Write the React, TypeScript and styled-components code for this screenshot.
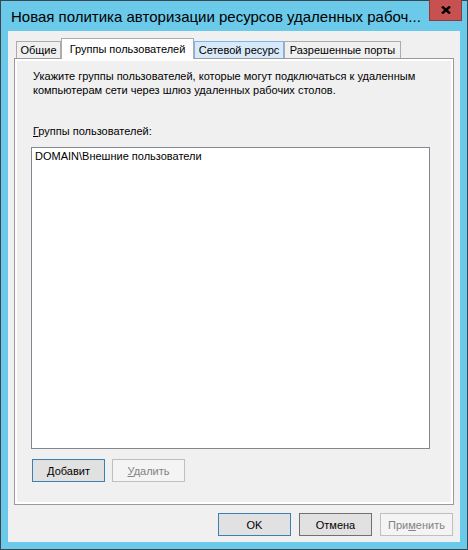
import React from "react";
import styled, { createGlobalStyle, css } from "styled-components";

const Global = createGlobalStyle`
  html, body { margin: 0; padding: 0; background: #ffffff; }
  body { font-family: "Liberation Sans", Arial, sans-serif; }
  * { box-sizing: border-box; }
`;

const Window = styled.div`
  width: 468px;
  height: 550px;
  border: 1px solid #3b4650;
  background: #6bcaea;
  display: flex;
  flex-direction: column;
`;

const TitleBar = styled.div`
  height: 30px;
  display: flex;
  align-items: center;
  flex: none;
`;

const Title = styled.div`
  flex: 1;
  padding-left: 10px;
  font-size: 15px;
  color: #000000;
  white-space: nowrap;
  overflow: hidden;
`;

const CloseButton = styled.div`
  align-self: flex-start;
  margin-top: -1px;
  margin-right: 5px;
  width: 33px;
  height: 21px;
  background: #c75050;
  border: 1px solid #8a3b3b;
  border-top: none;
  display: flex;
  align-items: center;
  justify-content: center;
`;

const Client = styled.div`
  flex: 1;
  margin: 0 7px 7px;
  background: #f0f0f0;
  display: flex;
  flex-direction: column;
  padding: 7px 6px 6px;
`;

const TabStrip = styled.div`
  height: 20px;
  display: flex;
  align-items: flex-end;
  padding-left: 2px;
  flex: none;
  position: relative;
  z-index: 1;
`;

type TabKind = "normal" | "selected" | "hot";

const Tab = styled.div<{ $kind: TabKind; $w: number }>`
  width: ${(p) => p.$w}px;
  height: 17px;
  border: 1px solid #acacac;
  border-bottom: none;
  background: #f0f0f0;
  font-size: 11px;
  color: #000;
  display: flex;
  align-items: center;
  justify-content: center;
  white-space: nowrap;
  ${(p) =>
    p.$kind === "selected" &&
    css`
      height: 21px;
      margin-bottom: -1px;
      background: #ffffff;
    `}
  ${(p) =>
    p.$kind === "hot" &&
    css`
      background: #d8eaf9;
      border-color: #7eb4ea;
    `}
`;

const Panel = styled.div`
  height: 447px;
  flex: none;
  border: 1px solid #999a9c;
  background: #ffffff;
  padding: 2px;
  display: flex;
`;

const Page = styled.div`
  flex: 1;
  background: #f0f0f0;
  display: flex;
  flex-direction: column;
  align-items: flex-start;
  padding: 8px 14px 0;
  font-size: 11px;
  color: #000;
`;

const Description = styled.div`
  margin-left: 2px;
  line-height: 14px;
`;

const Label = styled.div`
  margin: 27px 0 0 2px;
  line-height: 14px;
`;

const Mn = styled.u`
  text-underline-offset: 1px;
`;

const ListBox = styled.div`
  margin-top: 9px;
  width: 399px;
  height: 302px;
  border: 1px solid #828790;
  background: #ffffff;
  padding: 1px 2px 0;
`;

const ListItem = styled.div`
  line-height: 14px;
  padding-left: 1px;
  white-space: nowrap;
`;

const ButtonRow = styled.div<{ $end?: boolean }>`
  display: flex;
  gap: ${(p) => (p.$end ? 8 : 7)}px;
  flex: none;
  ${(p) =>
    p.$end
      ? css`
          justify-content: flex-end;
          margin-top: 8px;
          padding-right: 1px;
        `
      : css`
          margin-top: 10px;
          margin-left: 1px;
        `}
`;

type BtnKind = "default" | "normal" | "disabled";

const Button = styled.div<{ $kind: BtnKind }>`
  width: 73px;
  height: 23px;
  border: 1px solid #adadad;
  background: #e1e1e1;
  font-size: 11px;
  color: #000;
  display: flex;
  align-items: center;
  justify-content: center;
  white-space: nowrap;
  ${(p) =>
    p.$kind === "default" &&
    css`
      border-color: #3c7fb1;
    `}
  ${(p) =>
    p.$kind === "normal" &&
    css`
      border-color: #707070;
    `}
  ${(p) =>
    p.$kind === "disabled" &&
    css`
      border-color: #bfbfbf;
      background: #f4f4f4;
      color: #838383;
    `}
`;

export default function App() {
  return (
    <>
      <Global />
      <Window>
        <TitleBar>
          <Title>Новая политика авторизации ресурсов удаленных рабоч...</Title>
          <CloseButton>
            <svg width="10" height="8" viewBox="0 0 10 8">
              <path d="M1 0.5 L9 7.5 M9 0.5 L1 7.5" stroke="#000" strokeWidth="2.4" fill="none" />
            </svg>
          </CloseButton>
        </TitleBar>
        <Client>
          <TabStrip>
            <Tab $kind="normal" $w={45}>Общие</Tab>
            <Tab $kind="selected" $w={133}>Группы пользователей</Tab>
            <Tab $kind="hot" $w={90}>Сетевой ресурс</Tab>
            <Tab $kind="normal" $w={117}>Разрешенные порты</Tab>
          </TabStrip>
          <Panel>
            <Page>
              <Description>
                Укажите группы пользователей, которые могут подключаться к удаленным
                <br />
                компьютерам сети через шлюз удаленных рабочих столов.
              </Description>
              <Label>
                <Mn>Г</Mn>руппы пользователей:
              </Label>
              <ListBox>
                <ListItem>DOMAIN\Внешние пользователи</ListItem>
              </ListBox>
              <ButtonRow>
                <Button $kind="default">
                  <span>
                    <Mn>Д</Mn>обавит
                  </span>
                </Button>
                <Button $kind="disabled">
                  <span>
                    <Mn>У</Mn>далить
                  </span>
                </Button>
              </ButtonRow>
            </Page>
          </Panel>
          <ButtonRow $end>
            <Button $kind="default">OK</Button>
            <Button $kind="normal">Отмена</Button>
            <Button $kind="disabled">
              <span>
                При<Mn>м</Mn>енить
              </span>
            </Button>
          </ButtonRow>
        </Client>
      </Window>
    </>
  );
}
